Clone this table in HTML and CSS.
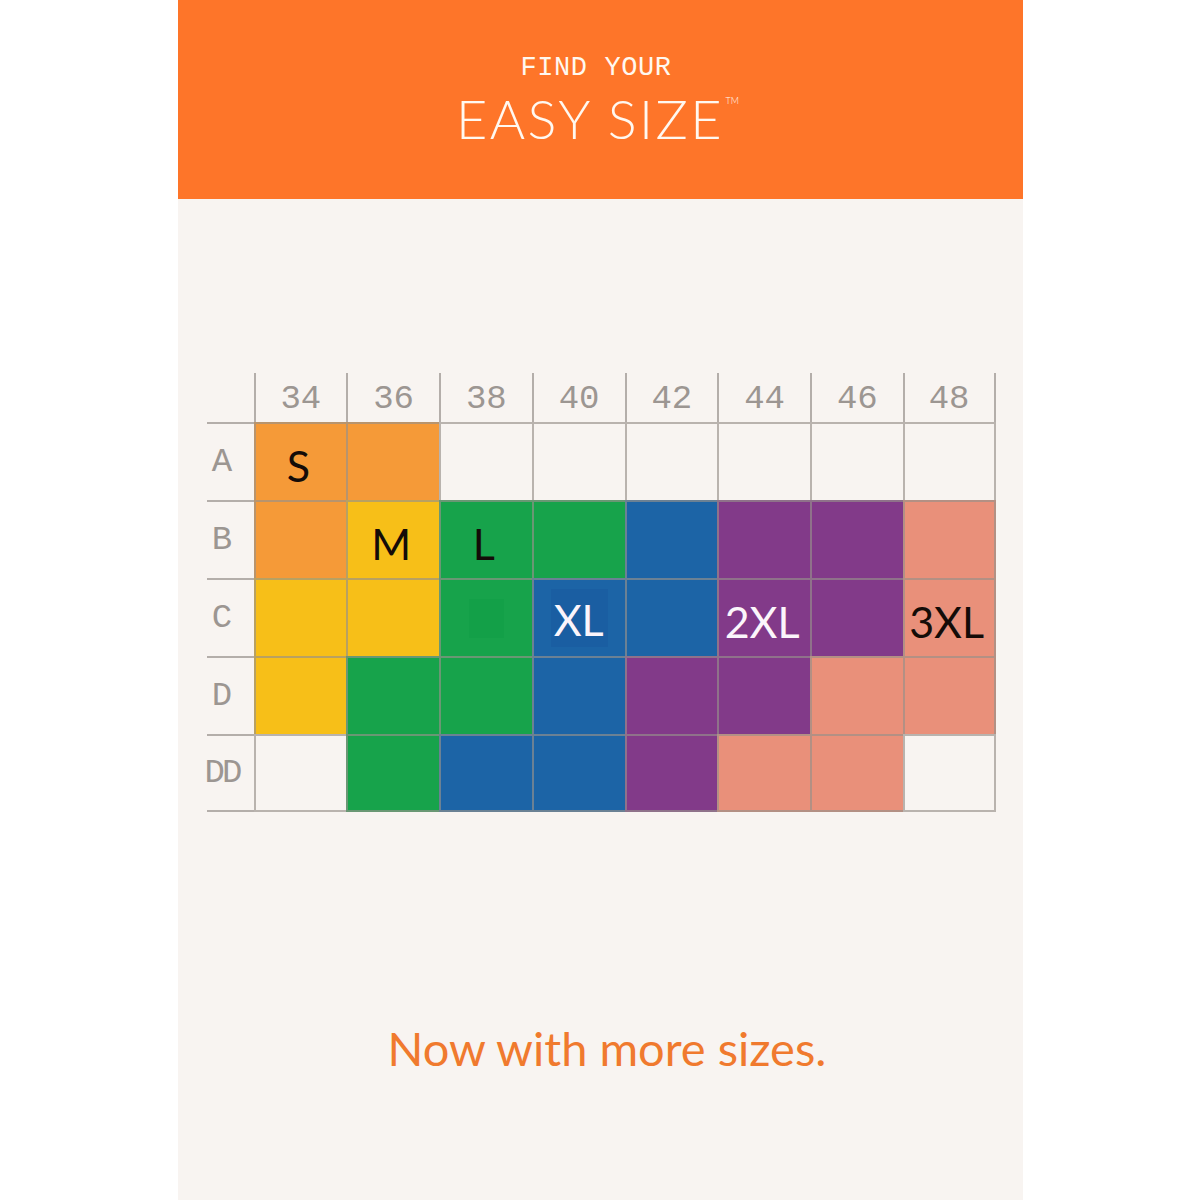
FILE: index.html
```html
<!DOCTYPE html>
<html>
<head>
<meta charset="utf-8">
<link rel="stylesheet" href="styles.css">
</head>
<body>
<div class="card">
  <header class="banner">
    <div class="kicker">FIND YOUR</div>
    <div class="title">EASY SIZE<span class="tm">TM</span></div>
  </header>
  <main class="body">
    <div class="chart">
      <div class="corner"></div>
      <div class="col">34</div><div class="col">36</div><div class="col">38</div><div class="col">40</div>
      <div class="col">42</div><div class="col">44</div><div class="col">46</div><div class="col last-col">48</div>

      <div class="row">A</div>
      <div class="cell orange"><span class="lbl dark">S</span></div>
      <div class="cell orange"></div>
      <div class="cell"></div><div class="cell"></div><div class="cell"></div><div class="cell"></div><div class="cell"></div>
      <div class="cell last-col"></div>

      <div class="row">B</div>
      <div class="cell orange"></div>
      <div class="cell yellow"><span class="lbl dark">M</span></div>
      <div class="cell green"><span class="lbl dark">L</span></div>
      <div class="cell green"></div>
      <div class="cell blue"></div>
      <div class="cell purple"></div>
      <div class="cell purple"></div>
      <div class="cell salmon last-col"></div>

      <div class="row">C</div>
      <div class="cell yellow"></div>
      <div class="cell yellow"></div>
      <div class="cell green"><span class="mark-green"></span></div>
      <div class="cell blue"><span class="lbl light boxed">XL</span></div>
      <div class="cell blue"></div>
      <div class="cell purple"><span class="lbl light">2XL</span></div>
      <div class="cell purple"></div>
      <div class="cell salmon last-col"><span class="lbl dark">3XL</span></div>

      <div class="row">D</div>
      <div class="cell yellow"></div>
      <div class="cell green"></div>
      <div class="cell green"></div>
      <div class="cell blue"></div>
      <div class="cell purple"></div>
      <div class="cell purple"></div>
      <div class="cell salmon"></div>
      <div class="cell salmon last-col"></div>

      <div class="row last-row">DD</div>
      <div class="cell last-row"></div>
      <div class="cell green last-row"></div>
      <div class="cell blue last-row"></div>
      <div class="cell blue last-row"></div>
      <div class="cell purple last-row"></div>
      <div class="cell salmon last-row"></div>
      <div class="cell salmon last-row"></div>
      <div class="cell last-row last-col"></div>
    </div>
    <p class="tagline">Now with more sizes.</p>
  </main>
</div>
</body>
</html>
```

FILE: styles.css
```css
* { box-sizing: border-box; }
html, body { margin: 0; padding: 0; background: #ffffff; }

.card {
  width: 845px;
  height: 1200px;
  margin: 0 auto;
  background: #f8f4f1;
  display: flex;
  flex-direction: column;
}

.banner {
  height: 199px;
  background: #fe7529;
  color: #fff8f0;
  display: flex;
  flex-direction: column;
  align-items: center;
  padding-top: 53px;
}

.kicker {
  font-family: "Liberation Mono", "DejaVu Sans Mono", monospace;
  font-size: 27px;
  line-height: 30px;
  letter-spacing: 0.6px;
  margin-left: -8px;
}

.title {
  font-family: Lato, "Noto Sans", sans-serif;
  font-weight: 300;
  font-size: 54px;
  line-height: 56px;
  margin-top: 8px;
  margin-right: 20px;
  position: relative;
  letter-spacing: 2.4px;
}

.tm {
  position: absolute;
  top: 5px;
  right: -15px;
  font-size: 9px;
  line-height: 1;
  letter-spacing: 0;
}

.body {
  flex: 1;
  padding-top: 174px;
  display: flex;
  flex-direction: column;
}

.chart {
  margin-left: 29px;
  display: grid;
  grid-template-columns: 47px repeat(8, 92.75px);
  grid-template-rows: 49px repeat(5, 78px);
  width: 789px;
}

.col {
  font-family: "Liberation Mono", "DejaVu Sans Mono", monospace;
  font-size: 34px;
  color: #9c9692;
  border-left: 2px solid #b4aeaa;
  display: flex;
  align-items: center;
  justify-content: center;
  padding-top: 3px;
}
.col.last-col { border-right: 2px solid #b4aeaa; }

.row {
  font-family: "Liberation Mono", "DejaVu Sans Mono", monospace;
  font-size: 34px;
  color: #9c9692;
  border-top: 2px solid #b4aeaa;
  display: flex;
  align-items: center;
  justify-content: center;
  padding-right: 16px;
}
.row.last-row { border-bottom: 2px solid #b4aeaa; letter-spacing: -3px; }

.cell {
  position: relative;
  border-left: 2px solid rgba(150, 144, 139, 0.65);
  border-top: 2px solid rgba(150, 144, 139, 0.65);
  display: flex;
  align-items: center;
  justify-content: center;
}
.cell.last-col { border-right: 2px solid rgba(150, 144, 139, 0.65); }
.cell.last-row { border-bottom: 2px solid rgba(150, 144, 139, 0.65); }

.orange { background: #f59a38; }
.yellow { background: #f7bf18; }
.green  { background: #17a34b; }
.blue   { background: #1c64a6; }
.purple { background: #823a89; }
.salmon { background: #e9907a; }

.lbl {
  font-family: Lato, "Noto Sans", sans-serif;
  font-weight: 400;
  font-size: 43px;
  line-height: 1;
  margin-top: 6px;
  margin-right: 5px;
}
.dark { color: #140c08; }
.light { color: #fbf5fb; }

.boxed {
  background: #1a5ea2;
  padding: 9px 4px 6px 3px;
  margin-top: 0;
  margin-right: 0;
}

.mark-green {
  width: 35px;
  height: 39px;
  background: #13a048;
}

.tagline {
  margin: 211px 0 0 0;
  text-align: center;
  font-family: Lato, "Noto Sans", sans-serif;
  font-weight: 400;
  font-size: 47px;
  line-height: 50px;
  color: #f07a2e;
  padding-left: 14px;
}
```
